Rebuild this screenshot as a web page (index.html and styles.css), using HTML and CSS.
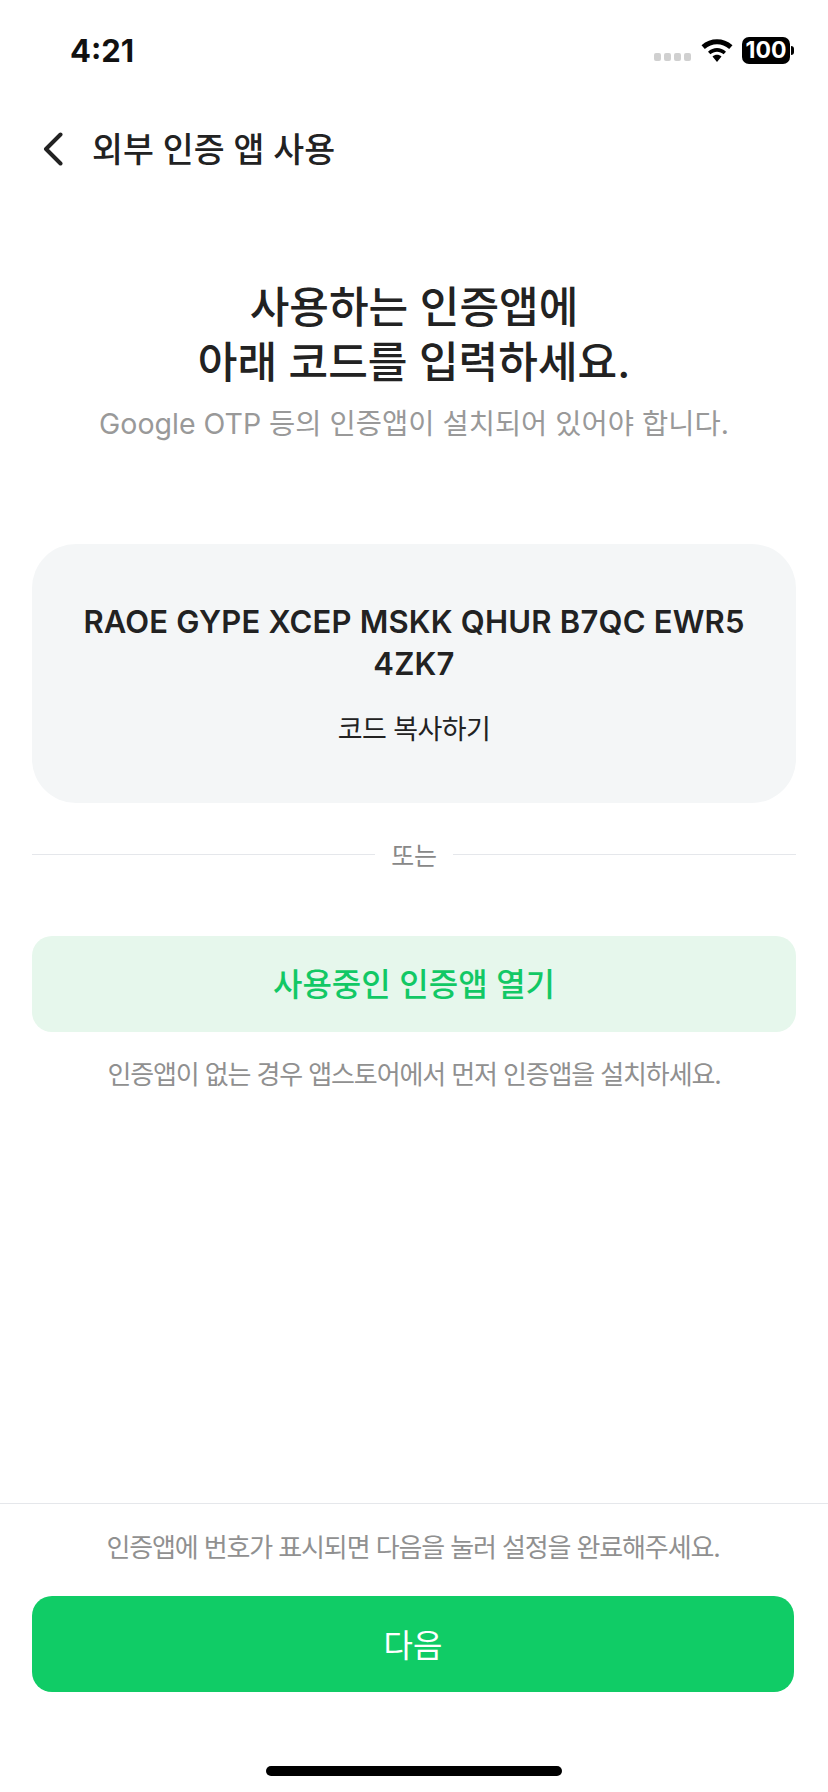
FILE: index.html
```html
<!DOCTYPE html>
<html lang="ko">
<head>
  <meta charset="UTF-8">
  <meta name="viewport" content="width=device-width, initial-scale=1.0">
  <title>외부 인증 앱 사용</title>
  <link rel="stylesheet" href="styles.css">
</head>
<body>
  <div class="page">
    <div class="status-bar">
      <span class="time">4:21</span>
      <div class="status-icons">
        <div class="signal"><i></i><i></i><i></i><i></i></div>
        <svg class="wifi" width="32" height="23" viewBox="0 -1 32 21" preserveAspectRatio="none">
          <path d="M16 20 L20.5 15 C18 12.8 14 12.8 11.5 15 Z M7 10.6 L9.4 13 C13.2 9.8 18.8 9.8 22.6 13 L25 10.6 C19.7 6.2 12.3 6.2 7 10.6 Z M0.5 4.6 L3.8 8.2 C10.8 2.4 21.2 2.4 28.2 8.2 L31.5 4.6 C22.4 -2.6 9.6 -2.6 0.5 4.6 Z" fill="#000"/>
        </svg>
        <div class="battery"><span class="battery-level">100</span><i class="battery-cap"></i></div>
      </div>
    </div>

    <header class="top-nav">
      <svg class="back" width="20" height="34" viewBox="0 0 20 34">
        <path d="M17.5 2.5 L3 17 L17.5 31.5" fill="none" stroke="#222" stroke-width="4" stroke-linecap="round" stroke-linejoin="round"/>
      </svg>
      <h2 class="nav-title">외부 인증 앱 사용</h2>
    </header>

    <main class="content">
      <h1 class="headline">사용하는 인증앱에<br>아래 코드를 입력하세요.</h1>
      <p class="subtitle">Google OTP 등의 인증앱이 설치되어 있어야 합니다.</p>

      <section class="code-card">
        <p class="code">RAOE GYPE XCEP MSKK QHUR B7QC EWR5 4ZK7</p>
        <p class="copy">코드 복사하기</p>
      </section>

      <div class="divider"><span>또는</span></div>

      <button class="open-app">사용중인 인증앱 열기</button>
      <p class="hint">인증앱이 없는 경우 앱스토어에서 먼저 인증앱을 설치하세요.</p>
    </main>

    <footer class="bottom">
      <p class="bottom-hint">인증앱에 번호가 표시되면 다음을 눌러 설정을 완료해주세요.</p>
      <button class="next">다음</button>
      <div class="home-indicator"></div>
    </footer>
  </div>
</body>
</html>
```

FILE: styles.css
```css
* {
  box-sizing: border-box;
}
body {
  margin: 0;
  background: #fff;
  font-family: 'Inter', 'Noto Sans CJK KR', sans-serif;
  color: #222;
}
p, h1, h2 {
  margin: 0;
}
button {
  display: block;
  border: none;
  font-family: inherit;
}
.page {
  width: 828px;
  height: 1792px;
  display: flex;
  flex-direction: column;
}
.status-bar {
  height: 100px;
  flex: none;
  display: flex;
  justify-content: space-between;
  align-items: center;
  padding: 0 34px 0 70px;
}
.time {
  font-size: 31px;
  font-weight: 700;
  color: #111;
}
.status-icons {
  display: flex;
  align-items: center;
}
.signal {
  display: flex;
  gap: 3px;
  margin-right: 10px;
  margin-top: 14px;
}
.signal i {
  width: 7px;
  height: 8px;
  border-radius: 2px;
  background: #d0d0d0;
}
.wifi {
  margin-right: 9px;
}
.battery {
  display: flex;
  align-items: center;
}
.battery-level {
  width: 48px;
  height: 27px;
  border-radius: 7px;
  background: #000;
  color: #fff;
  font-size: 23px;
  font-weight: 700;
  line-height: 27px;
  text-align: center;
}
.battery-cap {
  width: 3px;
  height: 9px;
  margin-left: 1px;
  border-radius: 0 3px 3px 0;
  background: #000;
}
.top-nav {
  flex: none;
  height: 98px;
  display: flex;
  align-items: center;
  padding-left: 43px;
}
.nav-title {
  margin-left: 29px;
  margin-bottom: 4px;
  font-size: 33.6px;
  font-weight: 500;
}
.content {
  flex: 1;
  padding: 82px 32px 0;
  text-align: center;
}
.headline {
  font-size: 43.1px;
  font-weight: 500;
  line-height: 55px;
}
.subtitle {
  margin-top: 14px;
  font-size: 28.5px;
  line-height: 40px;
  color: #999;
}
.code-card {
  height: 259px;
  margin-top: 100px;
  padding: 57px 32px 0;
  border-radius: 44px;
  background: #f4f6f7;
}
.code {
  font-size: 31px;
  font-weight: 600;
  line-height: 42px;
  letter-spacing: 0.2px;
}
.copy {
  margin-top: 25px;
  font-size: 27px;
  line-height: 40px;
  letter-spacing: -0.6px;
}
.divider {
  display: flex;
  align-items: center;
  gap: 16px;
  margin-top: 30px;
  height: 42px;
  font-size: 25px;
  letter-spacing: -0.3px;
  color: #888;
}
.divider::before, .divider::after {
  content: '';
  flex: 1;
  height: 1px;
  background: #e5e7eb;
}
.open-app {
  width: 100%;
  height: 96px;
  margin-top: 61px;
  padding-bottom: 5px;
  border-radius: 20px;
  background: #e6f7ec;
  color: #12c865;
  font-size: 32px;
  font-weight: 500;
}
.hint {
  margin-top: 23px;
  font-size: 26px;
  line-height: 40px;
  letter-spacing: -1.13px;
  color: #909090;
}
.bottom {
  flex: none;
  height: 289px;
  border-top: 1px solid #e5e7eb;
  padding: 24px 34px 0 32px;
  text-align: center;
  position: relative;
}
.bottom-hint {
  font-size: 26px;
  line-height: 40px;
  letter-spacing: -1.13px;
  color: #909090;
}
.next {
  width: 100%;
  height: 96px;
  margin-top: 28px;
  padding-bottom: 4px;
  border-radius: 20px;
  background: #10cc66;
  color: #fff;
  font-size: 32px;
  font-weight: 400;
}
.home-indicator {
  position: absolute;
  left: 266px;
  bottom: 16px;
  width: 296px;
  height: 10px;
  border-radius: 5px;
  background: #000;
}
```
